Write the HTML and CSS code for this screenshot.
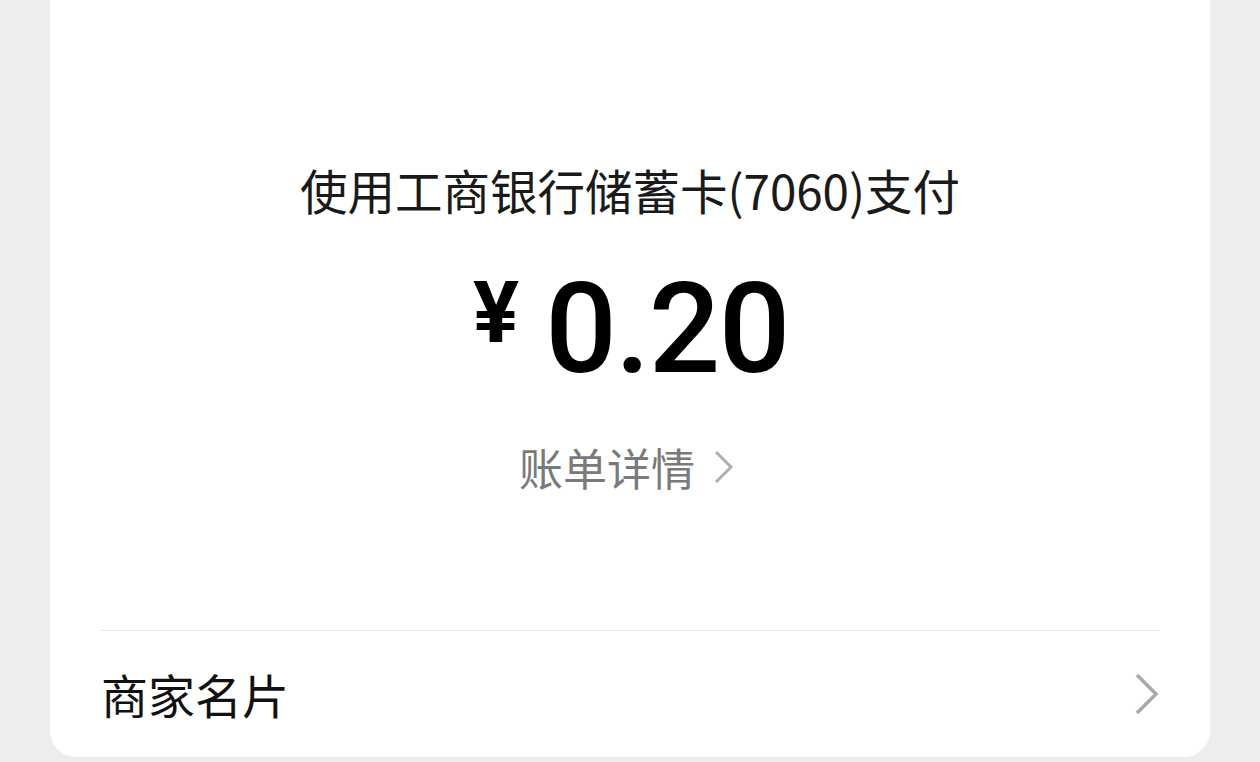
FILE: index.html
```html
<!DOCTYPE html>
<html lang="zh-CN">
<head>
<meta charset="utf-8">
<link rel="stylesheet" href="styles.css">
</head>
<body>
<div class="card">
  <div class="summary">
    <div class="pay-method">使用工商银行储蓄卡(7060)支付</div>
    <div class="amount">
      <span class="currency">¥</span>
      <span class="value">0.20</span>
    </div>
    <div class="detail-link">
      <span>账单详情</span>
      <svg class="chev-small" width="22" height="34" viewBox="0 0 22 34"><polyline points="3,2 18,17 3,32" fill="none" stroke="#b0b0b0" stroke-width="3"/></svg>
    </div>
  </div>
  <div class="divider"></div>
  <div class="row">
    <span class="row-label">商家名片</span>
    <svg class="chev" width="26" height="42" viewBox="0 0 26 42"><polyline points="3,2 22,21 3,40" fill="none" stroke="#a8a8a8" stroke-width="3.4"/></svg>
  </div>
</div>
</body>
</html>
```

FILE: styles.css
```css
html, body {
  margin: 0;
  padding: 0;
  background: #ededed;
  width: 1260px;
  height: 762px;
  overflow: hidden;
}
body {
  padding: 0 50px;
  box-sizing: border-box;
  font-family: "Noto Sans CJK SC", "Noto Sans", sans-serif;
}
.card {
  background: #ffffff;
  height: 757px;
  border-radius: 0 0 26px 26px;
  padding: 158px 50px 0;
  box-sizing: border-box;
  display: flex;
  flex-direction: column;
}
.summary {
  display: flex;
  flex-direction: column;
  align-items: center;
}
.pay-method {
  font-size: 47.5px;
  line-height: 64px;
  color: #1a1a1a;
  height: 64px;
}
.amount {
  margin-top: 44px;
  display: flex;
  align-items: flex-start;
  color: #000;
  font-family: Roboto, "Liberation Sans", sans-serif;
  margin-left: 2px;
}
.currency {
  font-size: 86px;
  line-height: 86px;
  font-weight: 700;
  margin-top: 4px;
  margin-right: 26px;
}
.value {
  font-size: 126px;
  line-height: 126px;
  font-weight: 500;
  letter-spacing: -1.5px;
}
.detail-link {
  margin-top: 47px;
  height: 56px;
  display: flex;
  align-items: center;
  gap: 18px;
  font-size: 44px;
  line-height: 56px;
  color: #7a7a7a;
  margin-left: -6px;
}
.divider {
  margin-top: 135px;
  height: 1px;
  background: #e6e6e6;
}
.row {
  flex: 1;
  display: flex;
  align-items: center;
  justify-content: space-between;
  padding-left: 1px;
}
.row-label {
  font-size: 47px;
  line-height: 60px;
  color: #111;
}
.chev {
  display: block;
}
```
